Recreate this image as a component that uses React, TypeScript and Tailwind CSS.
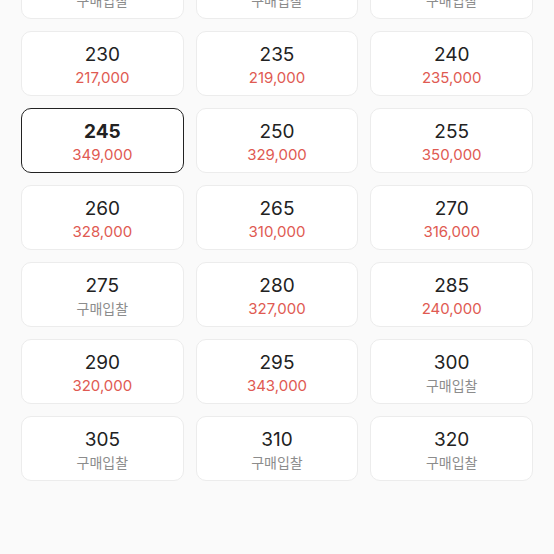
type Size = {
  size: string;
  price?: string;
};

const sizes: Size[] = [
  { size: '215' },
  { size: '220' },
  { size: '225' },
  { size: '230', price: '217,000' },
  { size: '235', price: '219,000' },
  { size: '240', price: '235,000' },
  { size: '245', price: '349,000' },
  { size: '250', price: '329,000' },
  { size: '255', price: '350,000' },
  { size: '260', price: '328,000' },
  { size: '265', price: '310,000' },
  { size: '270', price: '316,000' },
  { size: '275' },
  { size: '280', price: '327,000' },
  { size: '285', price: '240,000' },
  { size: '290', price: '320,000' },
  { size: '295', price: '343,000' },
  { size: '300' },
  { size: '305' },
  { size: '310' },
  { size: '320' },
];

const selected = '245';

export default function App() {
  return (
    <div
      className="w-[554px] h-[554px] overflow-hidden bg-[#fafafa]"
      style={{ fontFamily: 'Inter, "Noto Sans CJK KR", sans-serif' }}
    >
      <div className="grid grid-cols-3 gap-3 px-[21px] -mt-[46px]">
        {sizes.map((s) => {
          const active = s.size === selected;
          return (
            <button
              key={s.size}
              className={`h-[65px] rounded-[10px] bg-white flex flex-col items-center justify-start pt-[12px] gap-[2px] ${
                active ? 'border-[1.5px] border-[#222]' : 'border border-[#ececec]'
              }`}
            >
              <span
                className={`text-[19px] leading-[22px] text-[#222] ${active ? 'font-bold' : 'font-normal'}`}
              >
                {s.size}
              </span>
              {s.price ? (
                <span className="text-[15px] leading-[20px] text-[#e05a52]">{s.price}</span>
              ) : (
                <span className="text-[14px] leading-[20px] text-[#8c8c8c]">구매입찰</span>
              )}
            </button>
          );
        })}
      </div>
    </div>
  );
}
